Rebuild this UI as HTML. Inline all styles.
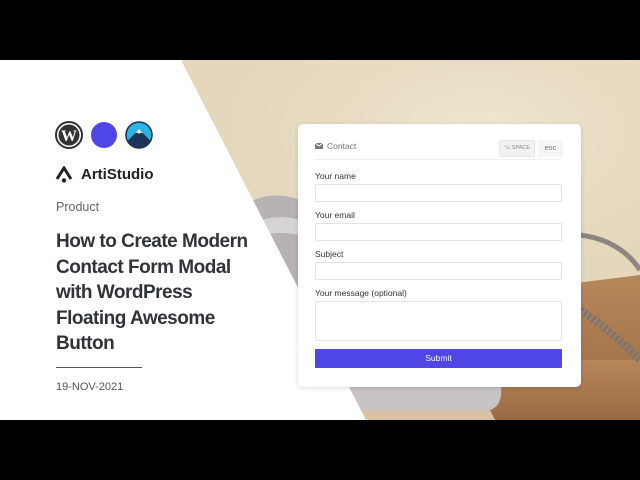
<!DOCTYPE html>
<html><head><style>
*{margin:0;padding:0;box-sizing:border-box}
body{width:640px;height:480px;background:#000;position:relative;overflow:hidden;font-family:"Liberation Sans",sans-serif}
#stage{position:absolute;left:0;top:60px;width:640px;height:360px;overflow:hidden;background:#e4d7bb}
.t{position:absolute;color:#2b2f36}
.lbl{position:absolute;left:17px;font-size:8.5px;color:#333}
.inp{position:absolute;left:17px;width:247px;border:1px solid #e4e4e7;border-radius:2px;background:#fff}
</style></head><body>
<div id="stage">
  <svg style="position:absolute;left:0;top:0" width="640" height="360">
    <defs>
      <radialGradient id="w" cx="0.75" cy="0.2" r="0.5"><stop offset="0" stop-color="#efe7d3"/><stop offset="1" stop-color="#e4d7bb" stop-opacity="0"/></radialGradient>
      <linearGradient id="d" x1="0" y1="0" x2="0" y2="1"><stop offset="0" stop-color="#b7875a"/><stop offset="1" stop-color="#9a6a42"/></linearGradient>
    </defs>
    <rect width="640" height="360" fill="url(#w)"/>
    <!-- desk -->
    <polygon points="560,225 640,215 640,360 520,360" fill="url(#d)"/>
    <polygon points="330,300 640,300 640,360 330,360" fill="url(#d)"/>
    <!-- phone handset -->
    <path d="M225,160 Q260,125 300,140 L300,330 L250,330 Z" fill="#b5b1b5"/>
    <path d="M235,175 Q265,150 300,160 L300,175 Q265,168 240,185Z" fill="#d6d3d6"/>
    <!-- phone base -->
    <path d="M330,320 L500,320 Q505,345 490,350 L340,350 Z" fill="#c9c4c4"/>
    <path d="M340,350 L490,350 L495,360 L335,360Z" fill="#d8c2a5"/>
    <!-- cord -->
    <path d="M580,250 Q610,270 640,300" stroke="#7d756f" stroke-width="8" fill="none" stroke-dasharray="3 2"/>
    <path d="M580,175 Q620,180 640,210" stroke="#8c8580" stroke-width="5" fill="none"/>
    <!-- white diagonal panel -->
    <polygon points="0,0 181,0 366,360 0,360" fill="#fff"/>
  </svg>
</div>

<svg style="position:absolute;left:55px;top:121px" width="28" height="28" viewBox="0 0 28 28"><circle cx="14" cy="14" r="13" fill="#fff" stroke="#333" stroke-width="2"/><circle cx="14" cy="14" r="10.5" fill="#333"/><text x="14" y="20" text-anchor="middle" font-family="Liberation Serif" font-weight="bold" font-size="16" fill="#fff">W</text></svg>
<div style="position:absolute;left:91px;top:122px;width:26px;height:26px;border-radius:50%;background:#4f46e5"></div>
<svg style="position:absolute;left:125px;top:121px" width="28" height="28" viewBox="0 0 28 28"><circle cx="14" cy="14" r="13" fill="#2ab6e4" stroke="#1e2f4f" stroke-width="1.5"/><path d="M2.5 20 L14 8 L25.5 20 A12.5 12.5 0 0 1 2.5 20Z" fill="#1e3358"/><path d="M10 12.5 L14 8 L18 12.5 L15.5 11.5 L14 13 L12.5 11.5Z" fill="#fff"/></svg>
<svg style="position:absolute;left:55px;top:166px" width="18" height="18" viewBox="0 0 18 18"><path d="M2 13 L9 2 L16 13" fill="none" stroke="#222" stroke-width="3"/><circle cx="9" cy="14.5" r="2.2" fill="#222"/></svg>
<div class="t" style="left:81px;top:166px;font-size:15px;font-weight:bold;color:#222">ArtiStudio</div>
<div class="t" style="left:56px;top:200px;font-size:12.5px;color:#666">Product</div>
<div class="t" style="left:56px;top:229px;font-size:19px;font-weight:bold;line-height:25.5px;letter-spacing:-0.5px;color:#2f333a">How to Create Modern<br>Contact Form Modal<br>with WordPress<br>Floating Awesome<br>Button</div>
<div style="position:absolute;left:56px;top:367px;width:86px;height:1px;background:#555"></div>
<div class="t" style="left:56px;top:381px;font-size:11px;color:#555">19-NOV-2021</div>

<div style="position:absolute;left:298px;top:124px;width:283px;height:263px;background:#fff;border-radius:5px;box-shadow:0 1px 5px rgba(0,0,0,.15)">
  <svg style="position:absolute;left:17px;top:19px" width="8" height="6" viewBox="0 0 8 6"><rect width="8" height="6" fill="#777"/><path d="M0 0 L4 3 L8 0" stroke="#fff" stroke-width="1" fill="none"/></svg>
  <div style="position:absolute;left:29px;top:17px;font-size:8.5px;color:#777">Contact</div>
  <div style="position:absolute;left:201px;top:16px;width:36px;height:17px;background:#f1f1f2;border:1px solid #e6e6e8;border-radius:2px;font-size:5.5px;color:#888;text-align:center;line-height:15px">⌥ SPACE</div>
  <div style="position:absolute;left:240px;top:16px;width:25px;height:17px;background:#f6f6f7;border-radius:2px;font-size:7.5px;color:#777;text-align:center;line-height:16px">esc</div>
  <div style="position:absolute;left:17px;top:35px;width:247px;height:1px;background:#f0f0f0"></div>
  <div class="lbl" style="top:47px">Your name</div>
  <div class="inp" style="top:60px;height:18px"></div>
  <div class="lbl" style="top:86px">Your email</div>
  <div class="inp" style="top:99px;height:18px"></div>
  <div class="lbl" style="top:125px">Subject</div>
  <div class="inp" style="top:138px;height:18px"></div>
  <div class="lbl" style="top:164px">Your message (optional)</div>
  <div class="inp" style="top:177px;height:40px"></div>
  <div style="position:absolute;left:17px;top:225px;width:247px;height:19px;background:#4f46e5;border-radius:1px;color:#fff;font-size:8.5px;text-align:center;line-height:19px">Submit</div>
</div>
</body></html>
